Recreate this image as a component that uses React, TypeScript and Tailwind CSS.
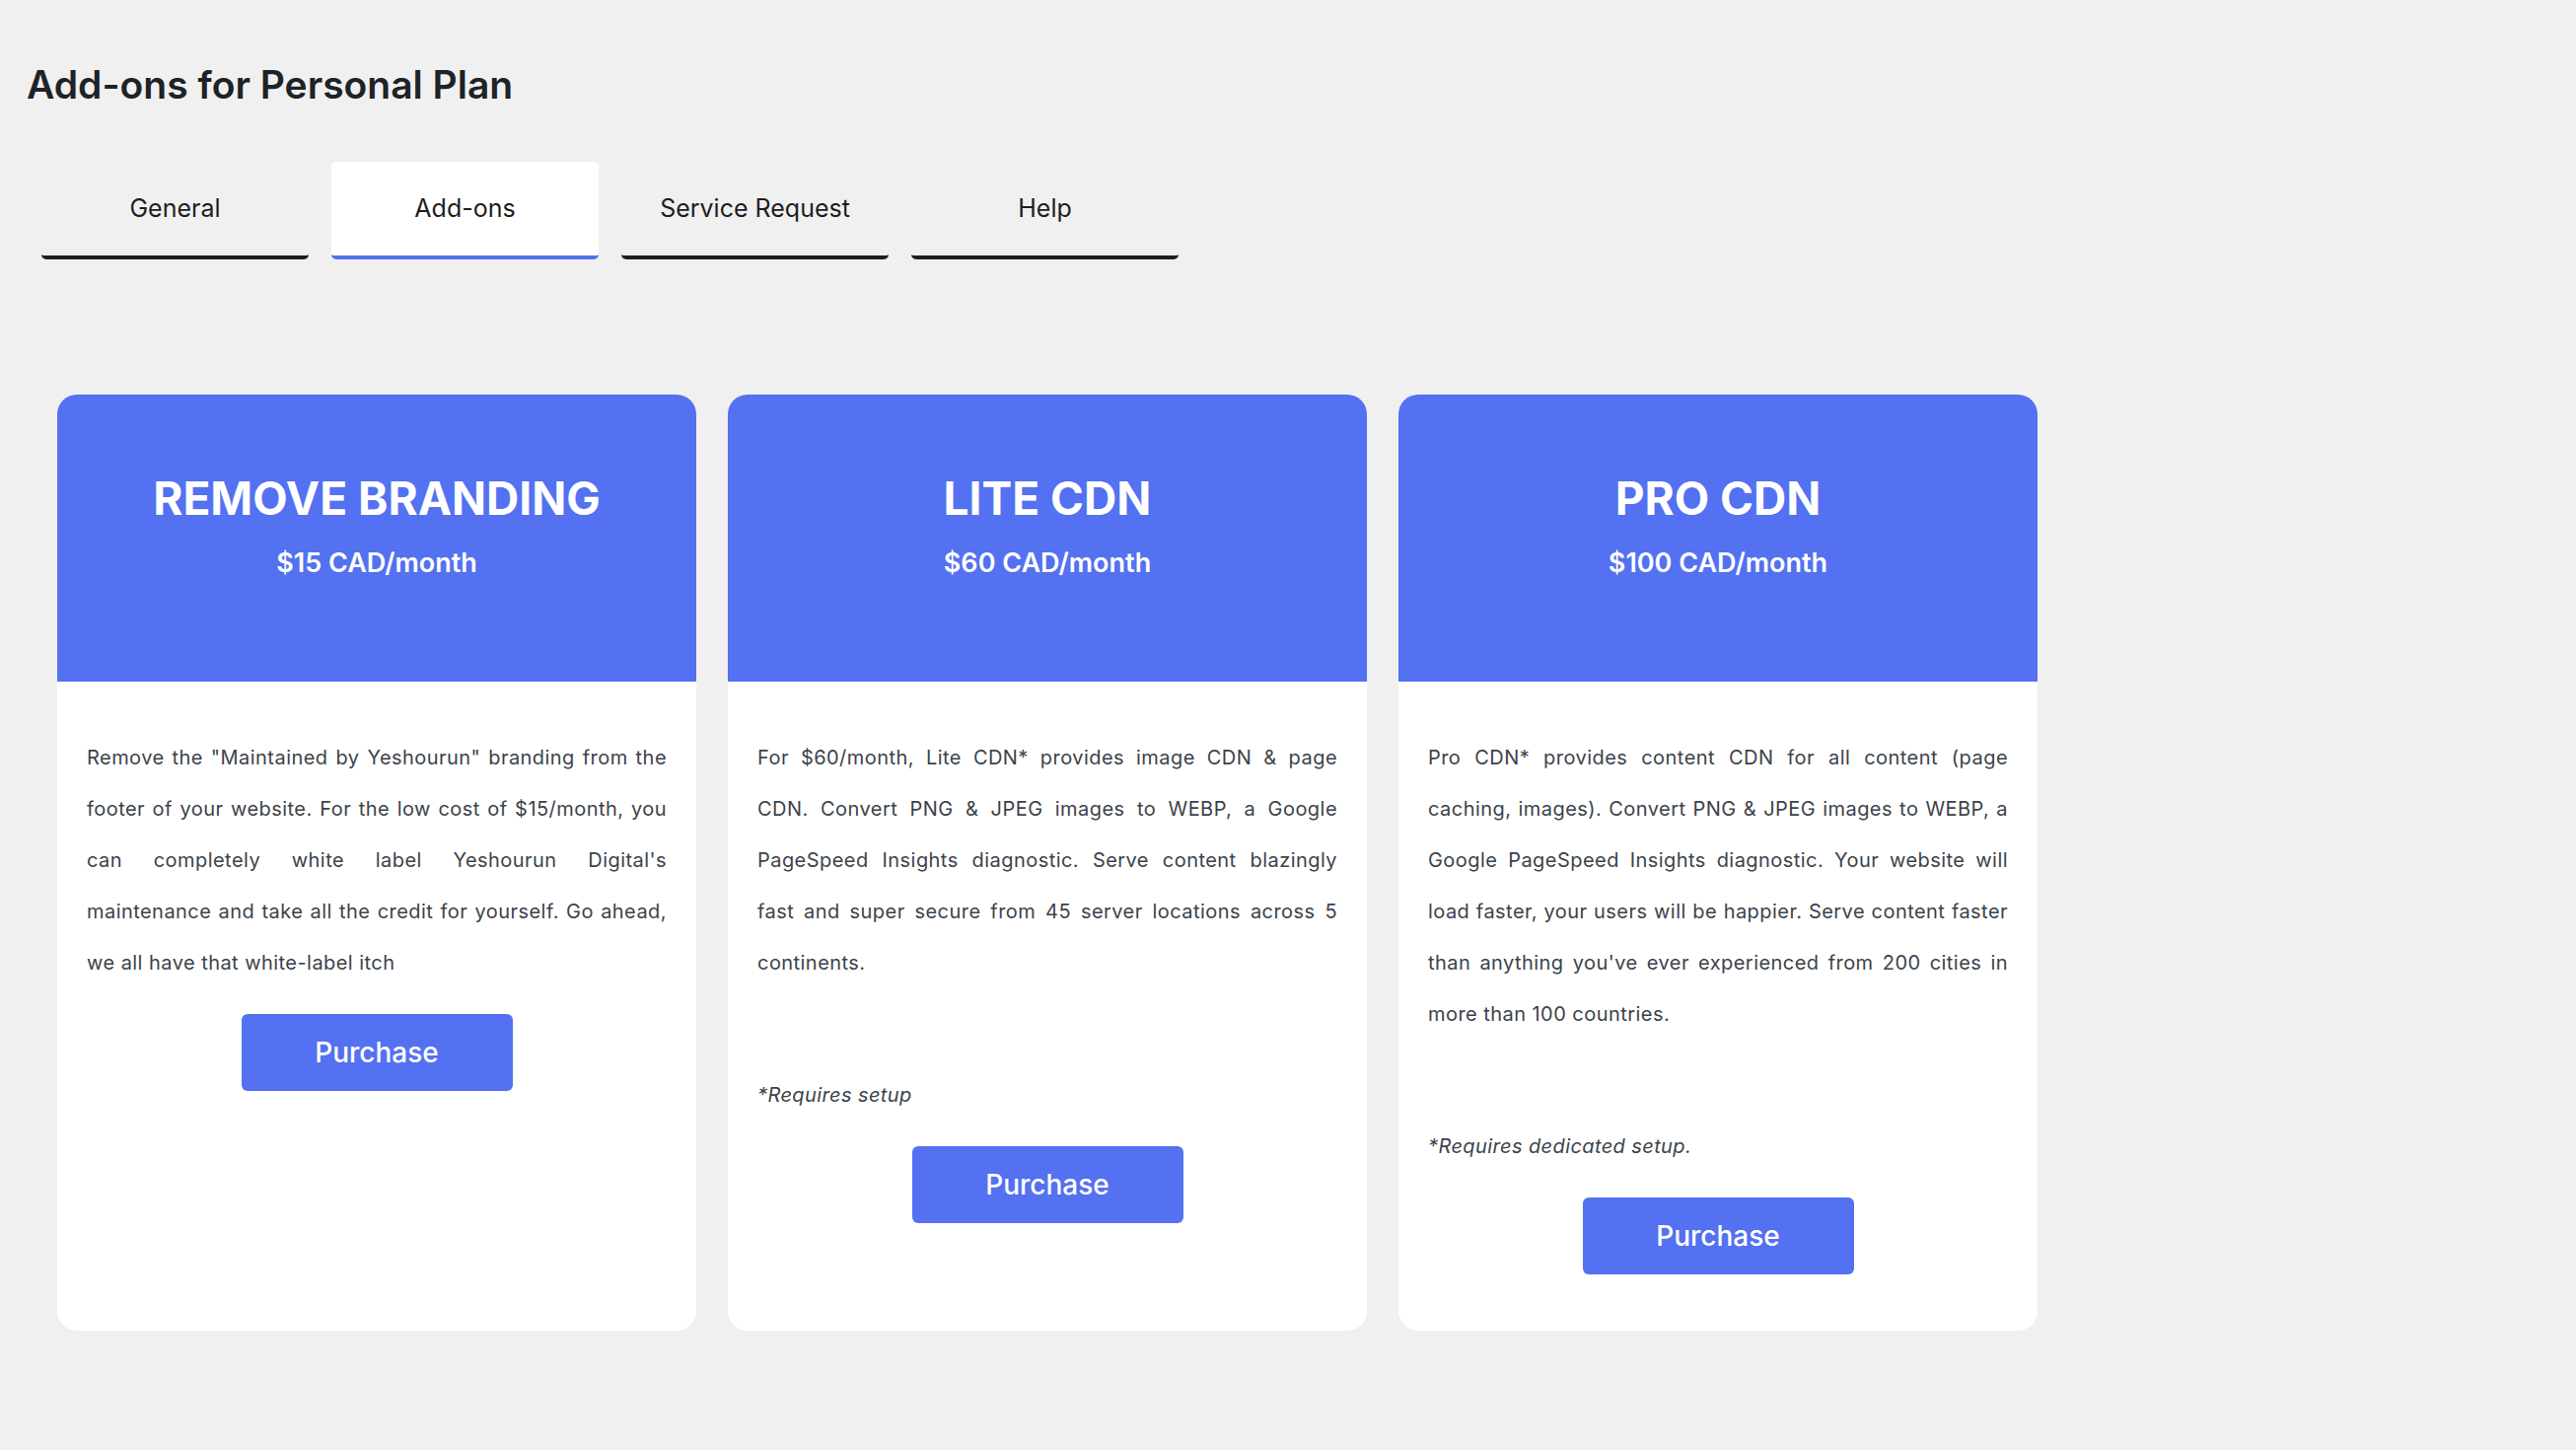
import React from 'react';

type Addon = {
  name: string;
  price: string;
  text: string;
  note?: string;
};

const addons: Addon[] = [
  {
    name: 'REMOVE BRANDING',
    price: '$15 CAD/month',
    text: 'Remove the "Maintained by Yeshourun" branding from the footer of your website. For the low cost of $15/month, you can completely white label Yeshourun Digital\'s maintenance and take all the credit for yourself. Go ahead, we all have that white-label itch',
  },
  {
    name: 'LITE CDN',
    price: '$60 CAD/month',
    text: 'For $60/month, Lite CDN* provides image CDN & page CDN. Convert PNG & JPEG images to WEBP, a Google PageSpeed Insights diagnostic. Serve content blazingly fast and super secure from 45 server locations across 5 continents.',
    note: '*Requires setup',
  },
  {
    name: 'PRO CDN',
    price: '$100 CAD/month',
    text: "Pro CDN* provides content CDN for all content (page caching, images). Convert PNG & JPEG images to WEBP, a Google PageSpeed Insights diagnostic. Your website will load faster, your users will be happier. Serve content faster than anything you've ever experienced from 200 cities in more than 100 countries.",
    note: '*Requires dedicated setup.',
  },
];

const tabs = ['General', 'Add-ons', 'Service Request', 'Help'];

const AddonCard: React.FC<{ addon: Addon }> = ({ addon }) => {
  return (
    <div className="bg-white rounded-[20px] overflow-hidden flex flex-col">
      <div className="h-[291px] bg-[#5371f0] text-white text-center pt-[77px]">
        <h2 className="text-[46px] leading-[56px] font-bold">{addon.name}</h2>
        <div className="mt-[22px] text-[27px] leading-[32px] font-semibold">{addon.price}</div>
      </div>
      <div className="px-[30px] pt-[51px] pb-[57px] flex flex-col">
        <p className="text-[20px] leading-[52px] tracking-[0.45px] text-[#3c434a] text-justify">{addon.text}</p>
        {addon.note && (
          <p className="mt-[82px] text-[20px] leading-[52px] tracking-[0.4px] italic text-[#3c434a]">{addon.note}</p>
        )}
        <button className="mx-auto mt-[26px] w-[275px] h-[78px] rounded-[6px] bg-[#5371f0] text-white text-[28px] font-medium">
          Purchase
        </button>
      </div>
    </div>
  );
};

export default function App() {
  return (
    <div className="min-h-screen bg-[#f0f0f1] font-['Inter',sans-serif] pl-[27px] pt-[62px] pb-[100px]">
      <h1 className="text-[39px] leading-[48px] font-semibold text-[#1d2327]">Add-ons for Personal Plan</h1>

      <div className="mt-[54px] ml-[15px] flex gap-[23px]">
        {tabs.map((tab) => (
          <div
            key={tab}
            className={
              tab === 'Add-ons'
                ? 'w-[271px] h-[99px] flex items-center justify-center rounded-[5px] border-b-4 border-[#5371f0] bg-white text-[25px] text-[#1e1e1e]'
                : 'w-[271px] h-[99px] flex items-center justify-center rounded-[5px] border-b-4 border-[#1e1e1e] text-[25px] text-[#1e1e1e]'
            }
          >
            {tab}
          </div>
        ))}
      </div>

      <div className="mt-[137px] ml-[31px] grid grid-cols-[repeat(3,648px)] gap-[32px]">
        {addons.map((a) => (
          <AddonCard key={a.name} addon={a} />
        ))}
      </div>
    </div>
  );
}
